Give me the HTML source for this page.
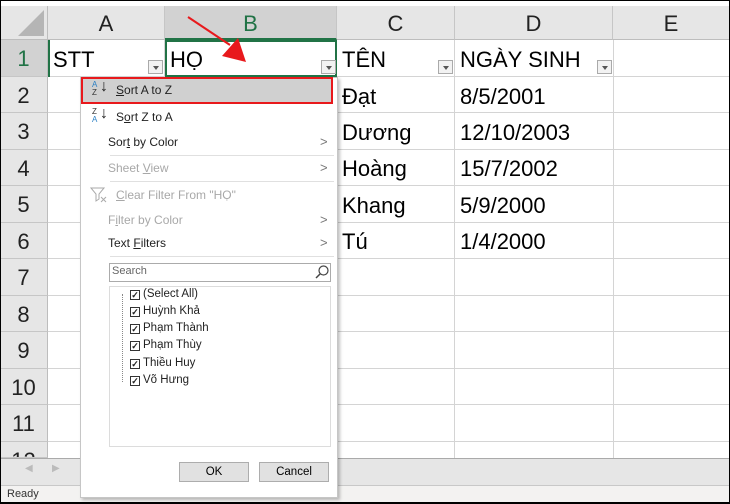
<!DOCTYPE html>
<html><head><meta charset="utf-8"><style>
*{margin:0;padding:0;box-sizing:border-box}
body{width:730px;height:504px;overflow:hidden;background:#fff;font-family:"Liberation Sans",sans-serif;position:relative}
.a{position:absolute}
.hl{position:absolute;background:#d4d4d4}
.ch{position:absolute;top:6px;height:34px;background:#e6e6e6;border-right:1px solid #c6c6c6;border-bottom:1px solid #bdbdbd;font-size:22px;text-align:center;line-height:36px;color:#222}
.rh{position:absolute;left:0;width:48px;background:#e6e6e6;border-bottom:1px solid #c6c6c6;border-right:1px solid #bdbdbd;font-size:22px;text-align:center;color:#222}
.c{position:absolute;font-size:22px;color:#000}
.dd{position:absolute;width:15px;height:14px;border:1px solid #aaa;background:#f2f2f2}
.dd:after{content:"";position:absolute;left:4px;top:5px;border-left:3px solid transparent;border-right:3px solid transparent;border-top:4px solid #555}
.m{position:absolute;font-size:12px;color:#222}
.g{color:#a8a8a8}
.arr{position:absolute;right:9px;font-size:13px;color:#777}
.cb{display:inline-block;width:10px;height:10px;border:1px solid #333;font-size:9px;line-height:8px;text-align:center;vertical-align:-1px;margin-right:3px;font-weight:bold}
.li{position:absolute;left:130px;font-size:11.5px;color:#222}
</style></head><body>
<div class="a" style="left:0;top:6px;width:48px;height:34px;background:#e6e6e6;border-right:1px solid #bdbdbd;border-bottom:1px solid #bdbdbd"></div>
<div class="a" style="left:18px;top:10px;width:0;height:0;border-left:26px solid transparent;border-bottom:26px solid #b5b5b5"></div>
<div class="ch" style="left:48px;width:117px">A</div>
<div class="ch" style="left:165px;width:172px;background:#d2d2d2;color:#217346;border-bottom:2px solid #217346">B</div>
<div class="ch" style="left:337px;width:118px">C</div>
<div class="ch" style="left:455px;width:158px">D</div>
<div class="ch" style="left:613px;width:117px">E</div>
<div class="rh" style="top:40px;height:37px;line-height:38px;background:#d2d2d2;color:#217346">1</div>
<div class="rh" style="top:77px;height:36px;line-height:38px">2</div>
<div class="rh" style="top:113px;height:37px;line-height:38px">3</div>
<div class="rh" style="top:150px;height:36px;line-height:38px">4</div>
<div class="rh" style="top:186px;height:37px;line-height:38px">5</div>
<div class="rh" style="top:223px;height:36px;line-height:38px">6</div>
<div class="rh" style="top:259px;height:37px;line-height:38px">7</div>
<div class="rh" style="top:296px;height:36px;line-height:38px">8</div>
<div class="rh" style="top:332px;height:37px;line-height:38px">9</div>
<div class="rh" style="top:369px;height:36px;line-height:38px">10</div>
<div class="rh" style="top:405px;height:37px;line-height:38px">11</div>
<div class="rh" style="top:442px;height:16px;line-height:38px;overflow:hidden">12</div>
<div class="hl" style="left:48px;top:76px;width:682px;height:1px"></div>
<div class="hl" style="left:48px;top:112px;width:682px;height:1px"></div>
<div class="hl" style="left:48px;top:149px;width:682px;height:1px"></div>
<div class="hl" style="left:48px;top:185px;width:682px;height:1px"></div>
<div class="hl" style="left:48px;top:222px;width:682px;height:1px"></div>
<div class="hl" style="left:48px;top:258px;width:682px;height:1px"></div>
<div class="hl" style="left:48px;top:295px;width:682px;height:1px"></div>
<div class="hl" style="left:48px;top:331px;width:682px;height:1px"></div>
<div class="hl" style="left:48px;top:368px;width:682px;height:1px"></div>
<div class="hl" style="left:48px;top:404px;width:682px;height:1px"></div>
<div class="hl" style="left:48px;top:441px;width:682px;height:1px"></div>
<div class="hl" style="left:164px;top:40px;width:1px;height:418px"></div>
<div class="hl" style="left:336px;top:40px;width:1px;height:418px"></div>
<div class="hl" style="left:454px;top:40px;width:1px;height:418px"></div>
<div class="hl" style="left:613px;top:40px;width:1px;height:418px"></div>
<div class="a" style="left:48px;top:40px;width:2px;height:37px;background:#217346"></div>
<div class="a" style="left:165px;top:40px;width:172px;height:37px;border:2px solid #217346"></div>
<div class="c" style="left:53px;top:47px">STT</div>
<div class="dd" style="left:148px;top:60px"></div>
<div class="c" style="left:170px;top:47px">HỌ</div>
<div class="dd" style="left:321px;top:60px"></div>
<div class="c" style="left:342px;top:47px">TÊN</div>
<div class="dd" style="left:438px;top:60px"></div>
<div class="c" style="left:460px;top:47px">NGÀY SINH</div>
<div class="dd" style="left:597px;top:60px"></div>
<div class="c" style="left:342px;top:84px">Đạt</div><div class="c" style="left:460px;top:84px">8/5/2001</div>
<div class="c" style="left:342px;top:120px">Dương</div><div class="c" style="left:460px;top:120px">12/10/2003</div>
<div class="c" style="left:342px;top:156px">Hoàng</div><div class="c" style="left:460px;top:156px">15/7/2002</div>
<div class="c" style="left:342px;top:193px">Khang</div><div class="c" style="left:460px;top:193px">5/9/2000</div>
<div class="c" style="left:342px;top:229px">Tú</div><div class="c" style="left:460px;top:229px">1/4/2000</div>
<div class="a" style="left:0;top:458px;width:730px;height:28px;background:#e6e6e6;border-top:1px solid #aaa;border-bottom:1px solid #c8c8c8"></div>
<div class="a" style="left:25px;top:463px;font-size:10px;color:#bbb">◀</div>
<div class="a" style="left:52px;top:463px;font-size:10px;color:#bbb">▶</div>
<div class="a" style="left:0;top:486px;width:730px;height:18px;background:#f3f2f1"></div>
<div class="a" style="left:7px;top:488px;font-size:11px;color:#333">Ready</div>
<svg class="a" style="left:0;top:0" width="730" height="504"><line x1="188" y1="17" x2="230" y2="45" stroke="#e8191c" stroke-width="2"/><polygon points="246,62 222,56 238,38" fill="#e8191c"/></svg>
<div class="a" style="left:80px;top:77px;width:258px;height:421px;background:#fff;border:1px solid #c6c6c6;box-shadow:2px 2px 3px rgba(0,0,0,.25)"></div>
<div class="a" style="left:81px;top:77px;width:252px;height:27px;background:#d0d0d0;border:2px solid #e8191c"></div>
<div class="m" style="left:92px;top:81px;font-size:8px;line-height:8px;color:#2a7fc4">A<br><span style="color:#333">Z</span></div><div class="m" style="left:100px;top:78px;font-size:16px">↓</div>
<div class="m" style="left:116px;top:83px"><u>S</u>ort A to Z</div>
<div class="m" style="left:92px;top:108px;font-size:8px;line-height:8px;color:#333">Z<br><span style="color:#2a7fc4">A</span></div><div class="m" style="left:100px;top:105px;font-size:16px">↓</div>
<div class="m" style="left:116px;top:110px">S<u>o</u>rt Z to A</div>
<div class="m" style="left:108px;top:135px">Sor<u>t</u> by Color</div><div class="arr" style="left:320px;top:134px">&gt;</div>
<div class="a" style="left:110px;top:155px;width:224px;height:1px;background:#e0e0e0"></div>
<div class="m g" style="left:108px;top:161px">Sheet <u>V</u>iew</div><div class="arr g" style="left:320px;top:160px">&gt;</div>
<div class="a" style="left:110px;top:181px;width:224px;height:1px;background:#e0e0e0"></div>
<svg class="a" style="left:90px;top:186px" width="18" height="18"><path d="M1 2 H14 L9 8 V13 L6 15 V8 Z" fill="none" stroke="#aaa"/><path d="M11 11 l5 5 M16 11 l-5 5" stroke="#aaa"/></svg>
<div class="m g" style="left:116px;top:188px"><u>C</u>lear Filter From "HỌ"</div>
<div class="m g" style="left:108px;top:213px">F<u>i</u>lter by Color</div><div class="arr g" style="left:320px;top:212px">&gt;</div>
<div class="m" style="left:108px;top:236px">Text <u>F</u>ilters</div><div class="arr" style="left:320px;top:235px">&gt;</div>
<div class="a" style="left:110px;top:256px;width:224px;height:1px;background:#e0e0e0"></div>
<div class="a" style="left:109px;top:263px;width:222px;height:19px;border:1px solid #ababab"></div>
<div class="m" style="left:112px;top:265px;font-size:11px;color:#666">Search</div>
<svg class="a" style="left:314px;top:264px" width="16" height="16"><circle cx="9.5" cy="6.5" r="4.5" fill="none" stroke="#444" stroke-width="1.2"/><line x1="6" y1="10" x2="2" y2="14" stroke="#444" stroke-width="1.5"/></svg>
<div class="a" style="left:109px;top:286px;width:222px;height:161px;border:1px solid #dcdcdc"></div>
<div class="a" style="left:122px;top:294px;width:1px;height:88px;border-left:1px dotted #888"></div>
<div class="li" style="top:288px"><span class="cb">✓</span>(Select All)</div>
<div class="li" style="top:305px"><span class="cb">✓</span>Huỳnh Khả</div>
<div class="li" style="top:322px"><span class="cb">✓</span>Phạm Thành</div>
<div class="li" style="top:339px"><span class="cb">✓</span>Phạm Thùy</div>
<div class="li" style="top:357px"><span class="cb">✓</span>Thiều Huy</div>
<div class="li" style="top:374px"><span class="cb">✓</span>Võ Hưng</div>
<div class="a" style="left:179px;top:462px;width:70px;height:20px;background:#e1e1e1;border:1px solid #adadad;font-size:11.5px;text-align:center;line-height:18px">OK</div>
<div class="a" style="left:259px;top:462px;width:70px;height:20px;background:#e1e1e1;border:1px solid #adadad;font-size:11.5px;text-align:center;line-height:18px">Cancel</div>
<div class="a" style="left:0;top:0;width:730px;height:504px;border:1px solid #000;border-bottom-width:2px"></div>
</body></html>
